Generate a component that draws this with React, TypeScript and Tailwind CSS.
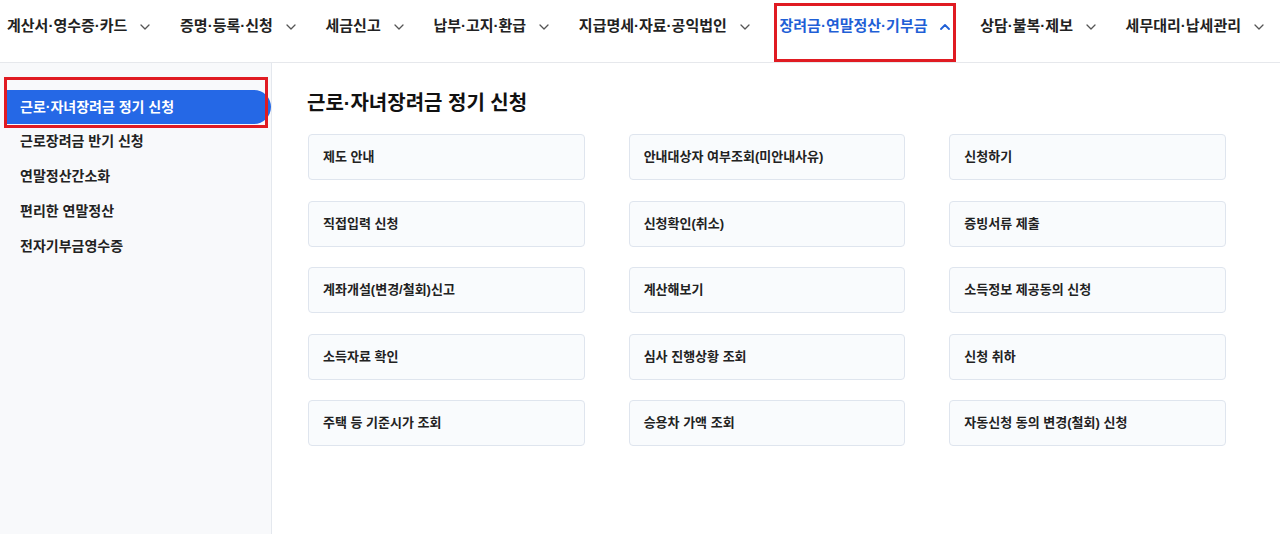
import React from "react";

const FONT = { fontFamily: '"Liberation Sans", "Noto Sans CJK KR", sans-serif' };

const navItems = [
  "계산서·영수증·카드",
  "증명·등록·신청",
  "세금신고",
  "납부·고지·환급",
  "지급명세·자료·공익법인",
  "장려금·연말정산·기부금",
  "상담·불복·제보",
  "세무대리·납세관리",
];

const sideItems = [
  "근로·자녀장려금 정기 신청",
  "근로장려금 반기 신청",
  "연말정산간소화",
  "편리한 연말정산",
  "전자기부금영수증",
];

const cards = [
  "제도 안내",
  "안내대상자 여부조회(미안내사유)",
  "신청하기",
  "직접입력 신청",
  "신청확인(취소)",
  "증빙서류 제출",
  "계좌개설(변경/철회)신고",
  "계산해보기",
  "소득정보 제공동의 신청",
  "소득자료 확인",
  "심사 진행상황 조회",
  "신청 취하",
  "주택 등 기준시가 조회",
  "승용차 가액 조회",
  "자동신청 동의 변경(철회) 신청",
];

function Chevron({ up, active }: { up?: boolean; active?: boolean }) {
  return (
    <svg width="10" height="6" viewBox="0 0 10 6" fill="none" className="shrink-0">
      <polyline
        points={up ? "1,5 5,1 9,5" : "1,1 5,5 9,1"}
        stroke={active ? "#1f5fd6" : "#555"}
        strokeWidth={active ? 1.8 : 1.3}
        strokeLinecap="round"
        strokeLinejoin="round"
      />
    </svg>
  );
}

export default function App() {
  return (
    <div className="w-[1280px] h-[534px] bg-white flex flex-col overflow-hidden" style={FONT}>
      <header className="h-[63px] border-b border-[#e6e8ec] flex items-center justify-between pl-[7px] pr-[16px] shrink-0">
        {navItems.map((t, i) => {
          const active = i === 5;
          return (
            <div key={t} className="relative flex items-center gap-[13px] h-full pb-[9px]">
              <span
                className={`text-[15px] font-bold ${active ? "text-[#1f5fd6]" : "text-[#222]"}`}
              >
                {t}
              </span>
              <Chevron up={active} active={active} />
              {active && (
                <div className="absolute left-[-5px] right-[-6px] top-[3px] bottom-0 border-[3px] border-[#e01b22]" />
              )}
            </div>
          );
        })}
      </header>
      <div className="flex flex-1">
        <aside className="relative w-[272px] shrink-0 bg-[#f8f9fb] border-r border-[#e4e8ee] pt-[27px]">
          {sideItems.map((t, i) =>
            i === 0 ? (
              <div
                key={t}
                className="ml-[5px] h-[34px] flex items-center pl-[15px] bg-[#2568e6] rounded-r-full text-white text-[14px] font-bold"
              >
                {t}
              </div>
            ) : (
              <div
                key={t}
                className="h-[35px] flex items-center pl-[20px] text-[#222] text-[14px] font-semibold"
              >
                {t}
              </div>
            )
          )}
          <div className="absolute left-[4px] top-[14px] w-[264px] h-[51px] border-[3px] border-[#e01b22]" />
        </aside>
        <main className="flex-1 pl-[35px] pt-[27px]">
          <h1 className="text-[20px] font-bold text-[#111] leading-[26px] mb-[18px]">
            근로·자녀장려금 정기 신청
          </h1>
          <div className="grid grid-cols-3 w-[918px] gap-x-[44px] gap-y-[20.5px] ml-[1px]">
            {cards.map((c) => (
              <div
                key={c}
                className="h-[46px] flex items-center pl-[14px] bg-[#f9fbfd] border border-[#dfe5ee] rounded-[4px] text-[13px] font-semibold text-[#222]"
              >
                {c}
              </div>
            ))}
          </div>
        </main>
      </div>
    </div>
  );
}
